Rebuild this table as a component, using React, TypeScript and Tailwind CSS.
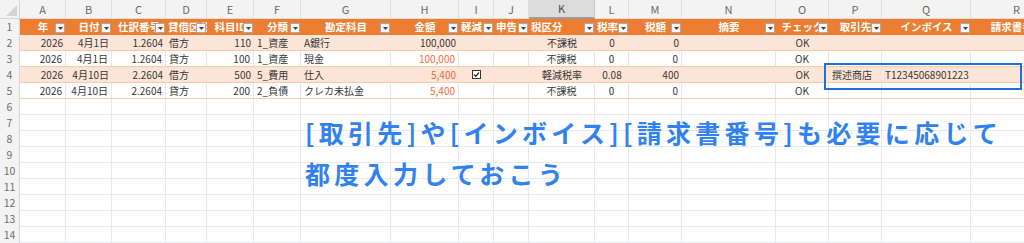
import React from "react";

const GRID =
  "grid grid-cols-[20px_46px_46px_54px_41px_47px_47px_90px_68px_35px_35px_66px_34px_53px_94px_53px_53px_89px_92px]";

const letters = ["A", "B", "C", "D", "E", "F", "G", "H", "I", "J", "K", "L", "M", "N", "O", "P", "Q", "R"];

const headers = [
  "年", "日付", "仕訳番号", "貸借区分", "科目ID", "分類", "勘定科目", "金額", "軽減",
  "申告", "税区分", "税率", "税額", "摘要", "チェック", "取引先", "インボイス", "請求書番号",
];

// header cells whose text starts at the left edge (overflowing or left aligned)
const leftHeaders = [3, 8, 9, 10, 11];

type Align = "l" | "r" | "c";
const aligns: Align[] = ["r", "r", "r", "l", "r", "l", "l", "r", "c", "c", "c", "c", "r", "l", "c", "l", "l", "l"];

const alignClass: Record<Align, string> = {
  l: "justify-start pl-[3px]",
  r: "justify-end pr-[3px]",
  c: "justify-center",
};

const CHECK = "__check";

const rows: { cells: string[]; red?: boolean; band: boolean }[] = [
  { band: true, cells: ["2026", "4月1日", "1.2604", "借方", "110", "1_資産", "A銀行", "100,000", "", "", "不課税", "0", "0", "", "OK", "", "", ""] },
  { band: false, red: true, cells: ["2026", "4月1日", "1.2604", "貸方", "100", "1_資産", "現金", "100,000", "", "", "不課税", "0", "0", "", "OK", "", "", ""] },
  { band: true, red: true, cells: ["2026", "4月10日", "2.2604", "借方", "500", "5_費用", "仕入", "5,400", CHECK, "", "軽減税率", "0.08", "400", "", "OK", "撰述商店", "T12345068901223", ""] },
  { band: false, red: true, cells: ["2026", "4月10日", "2.2604", "貸方", "200", "2_負債", "クレカ未払金", "5,400", "", "", "不課税", "0", "0", "", "OK", "", "", ""] },
];

const FilterButton = () => (
  <span className="absolute right-[1px] bottom-[2px] flex h-[10px] w-[10px] items-center justify-center border border-[#a9a9a9] bg-[#f6f6f6]">
    <svg width="5" height="3" viewBox="0 0 5 3">
      <path d="M0 0h5L2.5 3z" fill="#444" />
    </svg>
  </span>
);

const CheckBox = () => (
  <svg width="9" height="9" viewBox="0 0 9 9">
    <rect x="0.5" y="0.5" width="8" height="8" fill="white" stroke="#333" />
    <path d="M2 4.5l1.8 1.8L7 2.5" fill="none" stroke="#222" strokeWidth="1.2" />
  </svg>
);

const RowNum = ({ n }: { n: number }) => (
  <div className="flex h-[16px] items-center justify-center border-r border-[#d6d6d6] bg-[#f3f3f3] text-[10.5px] text-[#6e6e6e]">
    {n}
  </div>
);

export default function App() {
  return (
    <div className="relative h-[243px] w-[1024px] overflow-hidden bg-white font-['Noto_Sans_CJK_JP',sans-serif]">
      {/* column letters */}
      <div className={GRID}>
        <div className="relative h-[19px] border-r border-b border-[#d6d6d6] bg-[#f3f3f3]">
          <svg className="absolute right-[2px] bottom-[2px]" width="11" height="11" viewBox="0 0 11 11">
            <path d="M11 0v11H0z" fill="#d4d4d4" />
          </svg>
        </div>
        {letters.map((l) => (
          <div
            key={l}
            className={
              l === "K"
                ? "flex h-[19px] items-center justify-center border-r border-b-2 border-[#c4c4c4] border-b-[#9c9c9c] bg-[#dcdcdc] text-[11px] text-[#4a4a4a]"
                : "flex h-[19px] items-center justify-center border-r border-b border-[#dedede] bg-[#f3f3f3] text-[11px] text-[#6a6a6a]"
            }
          >
            {l}
          </div>
        ))}
      </div>

      {/* table header row */}
      <div className={GRID}>
        <RowNum n={1} />
        {headers.map((h, i) => (
          <div
            key={h}
            className={
              "relative flex h-[16px] items-center overflow-hidden whitespace-nowrap bg-[#ed7d31] text-[10.5px] font-bold text-white " +
              (leftHeaders.includes(i) ? "justify-start pl-[2px]" : "justify-center")
            }
          >
            {h}
            {i < 17 && <FilterButton />}
          </div>
        ))}
      </div>

      {/* data rows */}
      {rows.map((r, ri) => (
        <div key={ri} className={GRID}>
          <RowNum n={ri + 2} />
          {r.cells.map((c, ci) => (
            <div
              key={ci}
              className={
                "flex h-[16px] items-center overflow-hidden whitespace-nowrap border-b border-[#f8cbad] text-[10px] " +
                alignClass[aligns[ci]] +
                (r.band ? " bg-[#fce4d6]" : " border-r border-r-[#e6e6e6] bg-white") +
                (ci === 7 && r.red ? " text-[#f26b3a]" : " text-[#383838]")
              }
            >
              {c === CHECK ? <CheckBox /> : c}
            </div>
          ))}
        </div>
      ))}

      {/* empty rows */}
      {Array.from({ length: 9 }, (_, i) => (
        <div key={i} className={GRID}>
          <RowNum n={i + 6} />
          {letters.map((l) => (
            <div key={l} className="h-[16px] border-r border-b border-[#e6e9ee]" />
          ))}
        </div>
      ))}

      {/* selection outline */}
      <div className="absolute left-[824px] top-[63px] h-[27px] w-[198px] border-2 border-[#1f6fdc]" />

      {/* annotation */}
      <div className="absolute left-[305px] top-[112px] text-[25px] font-bold leading-[41px] tracking-[4.3px] text-[#3182f0]">
        <p>[取引先]や[インボイス][請求書番号]も必要に応じて</p>
        <p>都度入力しておこう</p>
      </div>
    </div>
  );
}
